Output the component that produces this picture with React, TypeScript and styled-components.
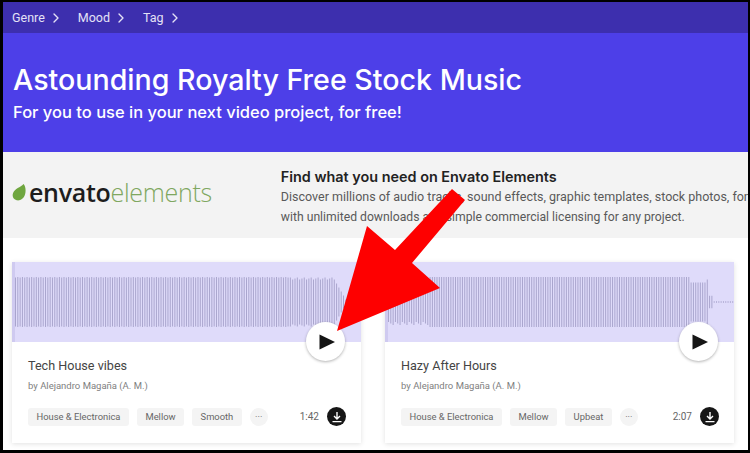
import React from "react";
import styled, { createGlobalStyle } from "styled-components";
import { FiChevronRight } from "react-icons/fi";

const GlobalStyle = createGlobalStyle`
  html, body {
    margin: 0;
    padding: 0;
    background: #fff;
  }
  * {
    box-sizing: border-box;
  }
`;

// amplitude per bar, 0..1 of the wave height
const buildWave = (count: number, shape: (t: number, i: number) => number) =>
  Array.from({ length: count }, (_, i) => shape(i / count, i));

const techWave = buildWave(150, (t, i) => {
  if (t > 0.955) return 0;
  if (t > 0.92) return 0.9 - (t - 0.92) * 24;
  if (t > 0.79) return 0.9 + (i % 3) * 0.04;
  return 0.98 + (i % 2) * 0.02;
});

const hazyWave = buildWave(150, (t, i) => {
  if (t > 0.937) return 0.03;
  if (t > 0.917) return i % 3 === 0 ? 0.9 : 0.25;
  if (t > 0.868) return 0.78;
  if (t < 0.115) return 0.8 + (i % 3) * 0.06;
  return 1;
});

const tracks = [
  {
    title: "Tech House vibes",
    tags: ["House & Electronica", "Mellow", "Smooth"],
    time: "1:42",
    wave: techWave,
  },
  {
    title: "Hazy After Hours",
    tags: ["House & Electronica", "Mellow", "Upbeat"],
    time: "2:07",
    wave: hazyWave,
  },
];

const Wave = ({ bars }: { bars: number[] }) => (
  <WaveSvg viewBox="0 0 349 50" preserveAspectRatio="none">
    {bars.map((a, i) => (
      <rect
        key={i}
        x={i * 2.33}
        y={25 - a * 25}
        width={1}
        height={a * 50}
        fill="#a9a5cd"
      />
    ))}
  </WaveSvg>
);

const App = () => {
  return (
    <Frame>
      <GlobalStyle />
      <Nav>
        <NavItem>
          Genre <FiChevronRight />
        </NavItem>
        <NavItem>
          Mood <FiChevronRight />
        </NavItem>
        <NavItem>
          Tag <FiChevronRight />
        </NavItem>
      </Nav>
      <Hero>
        <Title>Astounding Royalty Free Stock Music</Title>
        <Sub>For you to use in your next video project, for free!</Sub>
      </Hero>
      <Band>
        <Logo>
          <svg width="15" height="19" viewBox="0 0 14 17">
            <path
              d="M10.8 0.6C12.6 2.6 13.2 6.4 12.2 10.2 11 14.4 7.6 16.4 4.4 15.8 1.4 15.2-0.2 12.2 1 9 2.6 5 7.8 3.6 10.8 0.6Z"
              fill="#6fa63f"
            />
          </svg>
          <LogoDark>envato</LogoDark>
          <LogoLight>elements</LogoLight>
        </Logo>
        <BandText>
          <BandTitle>Find what you need on Envato Elements</BandTitle>
          <BandCopy $size={12.5}>
            Discover millions of audio tracks, sound effects, graphic templates, stock photos, fonts
          </BandCopy>
          <BandCopy $size={12.2}>
            with unlimited downloads and simple commercial licensing for any project.
          </BandCopy>
        </BandText>
      </Band>
      <Cards>
        {tracks.map((track) => (
          <Card key={track.title}>
            <WaveArea>
              <Wave bars={track.wave} />
              <PlayButton>
                <svg width="16" height="16" viewBox="0 0 16 16">
                  <path d="M0.5 0.5L16 8L0.5 15.5Z" fill="#151515" />
                </svg>
              </PlayButton>
            </WaveArea>
            <CardBody>
              <TrackTitle>{track.title}</TrackTitle>
              <Author>by Alejandro Magaña (A. M.)</Author>
              <Meta>
                <Tags>
                  {track.tags.map((tag) => (
                    <Tag key={tag}>{tag}</Tag>
                  ))}
                  <MoreTag>···</MoreTag>
                </Tags>
                <Time>{track.time}</Time>
                <Download>
                  <svg width="12" height="12" viewBox="0 0 12 12" fill="none" stroke="#fff" strokeWidth="1.4">
                    <path d="M6 1V7.6M3 5L6 8L9 5M1.5 10.6H10.5" />
                  </svg>
                </Download>
              </Meta>
            </CardBody>
          </Card>
        ))}
      </Cards>
      <Arrow viewBox="0 0 750 453" width="750" height="453">
        <polygon
          points="337,331 367,226 395,250 452,189 465,200 412,263 440,288"
          fill="#fe0000"
        />
      </Arrow>
    </Frame>
  );
};

export default App;

const Arrow = styled.svg`
  position: absolute;
  left: -3px;
  top: -2px;
  pointer-events: none;
`;
const Download = styled.div`
  width: 19px;
  height: 19px;
  border-radius: 50%;
  background: #161616;
  display: flex;
  align-items: center;
  justify-content: center;
  margin-left: 8px;
`;
const Time = styled.div`
  margin-left: auto;
  font-size: 10px;
  color: #666;
`;
const Tag = styled.div`
  height: 18px;
  padding: 0 8.5px;
  background: #f4f4f4;
  border-radius: 3px;
  font-size: 9.4px;
  line-height: 18px;
  color: #666;
  white-space: nowrap;
`;
const MoreTag = styled(Tag)`
  width: 18px;
  padding: 0;
  border-radius: 50%;
  text-align: center;
`;
const Tags = styled.div`
  display: flex;
  gap: 8px;
`;
const Meta = styled.div`
  display: flex;
  align-items: center;
  margin-top: 15px;
`;
const Author = styled.div`
  font-size: 9.5px;
  line-height: 12px;
  color: #808080;
  margin-top: 6px;
`;
const TrackTitle = styled.div`
  font-size: 12.6px;
  line-height: 16px;
  color: #444;
`;
const CardBody = styled.div`
  padding: 16px 15px 0 16px;
`;
const PlayButton = styled.div`
  position: absolute;
  right: 16px;
  bottom: -19px;
  width: 39px;
  height: 39px;
  border-radius: 50%;
  background: #fff;
  box-shadow: 0 1px 3px rgba(0, 0, 0, 0.3);
  display: flex;
  align-items: center;
  justify-content: center;
  padding-left: 2px;
`;
const WaveSvg = styled.svg`
  display: block;
  width: 100%;
  height: 50px;
`;
const WaveArea = styled.div`
  position: relative;
  height: 80px;
  padding-top: 15px;
  background: #dfdbfa;
  border-left: 3px solid #cfcaf0;
`;
const Card = styled.div`
  width: 349px;
  height: 181px;
  background: #fff;
  box-shadow: 0 1px 5px rgba(0, 0, 0, 0.12);
`;
const Cards = styled.div`
  display: flex;
  gap: 24px;
  padding: 24px 9px 0;
  background: #fff;
`;
const BandCopy = styled.div<{ $size: number }>`
  font-size: ${(p) => p.$size}px;
  line-height: 21px;
  color: #595959;
  white-space: nowrap;
`;
const BandTitle = styled.div`
  font-family: "Inter", sans-serif;
  font-weight: 600;
  font-size: 14.4px;
  line-height: 18px;
  color: #222;
`;
const BandText = styled.div`
  margin-left: 69px;
  padding-top: 5px;
`;
const LogoLight = styled.span`
  font-weight: 300;
  color: #7fa760;
  letter-spacing: -0.3px;
`;
const LogoDark = styled.span`
  font-weight: 600;
  color: #1d1d1d;
  letter-spacing: -0.3px;
  margin-left: 2px;
`;
const Logo = styled.div`
  width: 200px;
  display: flex;
  align-items: center;
  font-family: "Open Sans", sans-serif;
  font-size: 25px;
  line-height: 28px;
  margin-top: -6px;
`;
const Band = styled.div`
  height: 86px;
  padding-left: 9px;
  background: #f3f3f3;
  display: flex;
  align-items: center;
`;
const Sub = styled.div`
  font-family: "Inter", sans-serif;
  font-weight: 500;
  font-size: 16.5px;
  line-height: 22px;
  margin-top: 3px;
`;
const Title = styled.div`
  font-family: "Inter", sans-serif;
  font-weight: 500;
  font-size: 28.6px;
  line-height: 36px;
`;
const Hero = styled.div`
  height: 119px;
  padding: 29px 0 0 10px;
  background: #4d3fe8;
  color: #fff;
`;
const NavItem = styled.div`
  display: flex;
  align-items: center;
  gap: 3px;
  svg {
    font-size: 16px;
  }
`;
const Nav = styled.div`
  height: 31px;
  padding-left: 9px;
  background: #3d2fae;
  color: #e4e2f6;
  font-size: 12.5px;
  display: flex;
  align-items: center;
  gap: 14px;
`;
const Frame = styled.div`
  position: relative;
  width: 750px;
  height: 453px;
  border: solid #000;
  border-width: 2px 2px 3px 3px;
  overflow: hidden;
  background: #fff;
  font-family: "Roboto", sans-serif;
`;
